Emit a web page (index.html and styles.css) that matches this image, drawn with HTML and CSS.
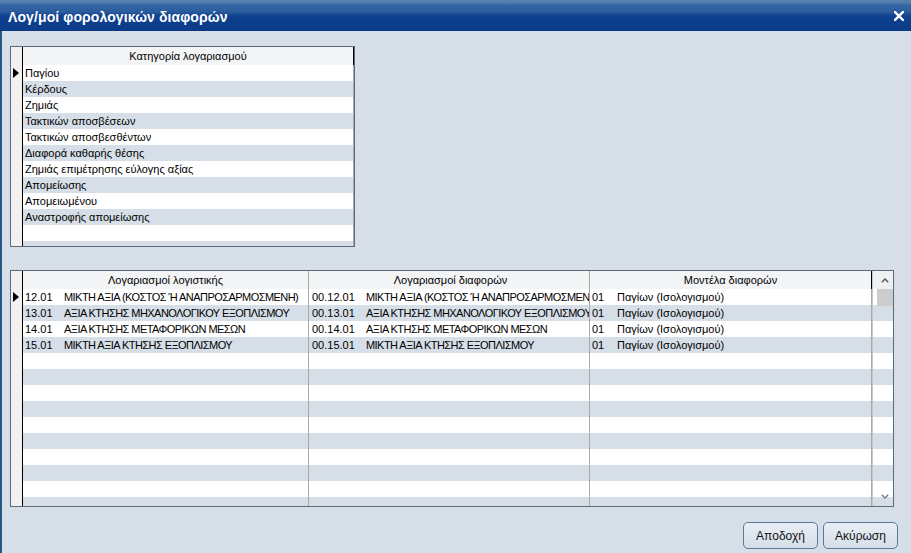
FILE: index.html
```html
<!DOCTYPE html>
<html lang="el">
<head>
<meta charset="utf-8">
<title>Λογ/μοί φορολογικών διαφορών</title>
<link rel="stylesheet" href="styles.css">
</head>
<body>
<div class="window">
  <div class="titlebar">
    <span class="title">Λογ/μοί φορολογικών διαφορών</span>
    <svg class="close" width="10" height="10" viewBox="0 0 10 10"><path d="M1 1L9 9M9 1L1 9" stroke="#fff" stroke-width="2.4" stroke-linecap="square"/></svg>
  </div>
  <div class="client">
    <div class="grid grid-top">
      <div class="row head"><div class="ind"></div><div class="cell hc last">Κατηγορία λογαριασμού</div></div>
      <div class="row w"><div class="ind"><span class="tri"></span></div><div class="cell">Παγίου</div></div>
      <div class="row g"><div class="ind"></div><div class="cell">Κέρδους</div></div>
      <div class="row w"><div class="ind"></div><div class="cell">Ζημιάς</div></div>
      <div class="row g"><div class="ind"></div><div class="cell">Τακτικών αποσβέσεων</div></div>
      <div class="row w"><div class="ind"></div><div class="cell">Τακτικών αποσβεσθέντων</div></div>
      <div class="row g"><div class="ind"></div><div class="cell">Διαφορά καθαρής θέσης</div></div>
      <div class="row w"><div class="ind"></div><div class="cell">Ζημιάς επιμέτρησης εύλογης αξίας</div></div>
      <div class="row g"><div class="ind"></div><div class="cell">Απομείωσης</div></div>
      <div class="row w"><div class="ind"></div><div class="cell">Απομειωμένου</div></div>
      <div class="row g"><div class="ind"></div><div class="cell">Αναστροφής απομείωσης</div></div>
      <div class="row w"><div class="ind"></div><div class="cell"></div></div>
      <div class="row g"><div class="ind"></div><div class="cell"></div></div>
    </div>

    <div class="grid grid-bottom">
      <div class="gmain">
        <div class="row head">
          <div class="ind"></div>
          <div class="cell c1 hc">Λογαριασμοί λογιστικής</div>
          <div class="cell c2 hc">Λογαριασμοί διαφορών</div>
          <div class="cell c3 hc last">Μοντέλα διαφορών</div>
        </div>
        <div class="row w">
          <div class="ind"><span class="tri"></span></div>
          <div class="cell c1"><span class="k1">12.01</span><span class="caps">ΜΙΚΤΗ ΑΞΙΑ (ΚΟΣΤΟΣ Ή ΑΝΑΠΡΟΣΑΡΜΟΣΜΕΝΗ)</span></div>
          <div class="cell c2"><span class="k2">00.12.01</span><span class="caps">ΜΙΚΤΗ ΑΞΙΑ (ΚΟΣΤΟΣ Ή ΑΝΑΠΡΟΣΑΡΜΟΣΜΕΝΗ)</span></div>
          <div class="cell c3"><span class="k3">01</span>Παγίων (Ισολογισμού)</div>
        </div>
        <div class="row g">
          <div class="ind"></div>
          <div class="cell c1"><span class="k1">13.01</span><span class="caps">ΑΞΙΑ ΚΤΗΣΗΣ ΜΗΧΑΝΟΛΟΓΙΚΟΥ ΕΞΟΠΛΙΣΜΟΥ</span></div>
          <div class="cell c2"><span class="k2">00.13.01</span><span class="caps">ΑΞΙΑ ΚΤΗΣΗΣ ΜΗΧΑΝΟΛΟΓΙΚΟΥ ΕΞΟΠΛΙΣΜΟΥ</span></div>
          <div class="cell c3"><span class="k3">01</span>Παγίων (Ισολογισμού)</div>
        </div>
        <div class="row w">
          <div class="ind"></div>
          <div class="cell c1"><span class="k1">14.01</span><span class="caps">ΑΞΙΑ ΚΤΗΣΗΣ ΜΕΤΑΦΟΡΙΚΩΝ ΜΕΣΩΝ</span></div>
          <div class="cell c2"><span class="k2">00.14.01</span><span class="caps">ΑΞΙΑ ΚΤΗΣΗΣ ΜΕΤΑΦΟΡΙΚΩΝ ΜΕΣΩΝ</span></div>
          <div class="cell c3"><span class="k3">01</span>Παγίων (Ισολογισμού)</div>
        </div>
        <div class="row g">
          <div class="ind"></div>
          <div class="cell c1"><span class="k1">15.01</span><span class="caps">ΜΙΚΤΗ ΑΞΙΑ ΚΤΗΣΗΣ ΕΞΟΠΛΙΣΜΟΥ</span></div>
          <div class="cell c2"><span class="k2">00.15.01</span><span class="caps">ΜΙΚΤΗ ΑΞΙΑ ΚΤΗΣΗΣ ΕΞΟΠΛΙΣΜΟΥ</span></div>
          <div class="cell c3"><span class="k3">01</span>Παγίων (Ισολογισμού)</div>
        </div>
        <div class="row w"><div class="ind"></div><div class="cell c1"></div><div class="cell c2"></div><div class="cell c3"></div></div>
        <div class="row g"><div class="ind"></div><div class="cell c1"></div><div class="cell c2"></div><div class="cell c3"></div></div>
        <div class="row w"><div class="ind"></div><div class="cell c1"></div><div class="cell c2"></div><div class="cell c3"></div></div>
        <div class="row g"><div class="ind"></div><div class="cell c1"></div><div class="cell c2"></div><div class="cell c3"></div></div>
        <div class="row w"><div class="ind"></div><div class="cell c1"></div><div class="cell c2"></div><div class="cell c3"></div></div>
        <div class="row g"><div class="ind"></div><div class="cell c1"></div><div class="cell c2"></div><div class="cell c3"></div></div>
        <div class="row w"><div class="ind"></div><div class="cell c1"></div><div class="cell c2"></div><div class="cell c3"></div></div>
        <div class="row g"><div class="ind"></div><div class="cell c1"></div><div class="cell c2"></div><div class="cell c3"></div></div>
        <div class="row w"><div class="ind"></div><div class="cell c1"></div><div class="cell c2"></div><div class="cell c3"></div></div>
        <div class="row g"><div class="ind"></div><div class="cell c1"></div><div class="cell c2"></div><div class="cell c3"></div></div>
        <div class="row w"><div class="ind"></div><div class="cell c1"></div><div class="cell c2"></div><div class="cell c3"></div></div>
      </div>
      <div class="sb">
        <div class="sb-up"><svg width="8" height="5" viewBox="0 0 8 5"><path d="M0.8 4.2L4 1L7.2 4.2" fill="none" stroke="#5a5a5a" stroke-width="1.5"/></svg></div>
        <div class="sb-thumb"></div>
        <div class="sb-track"></div>
        <div class="sb-down"><svg width="8" height="5" viewBox="0 0 8 5"><path d="M0.8 0.8L4 4L7.2 0.8" fill="none" stroke="#7a7a7a" stroke-width="1.3"/></svg></div>
      </div>
    </div>

    <div class="buttons">
      <button class="btn">Αποδοχή</button>
      <button class="btn">Ακύρωση</button>
    </div>
  </div>
</div>
</body>
</html>
```

FILE: styles.css
```css
* { box-sizing: border-box; }
html, body {
  margin: 0;
  padding: 0;
  width: 911px;
  height: 553px;
  overflow: hidden;
  background: #d6dee7;
  font-family: "Liberation Sans", Arial, sans-serif;
  font-size: 11px;
  color: #000;
}
.window {
  width: 911px;
  height: 553px;
  display: flex;
  flex-direction: column;
}
.titlebar {
  height: 31px;
  flex: none;
  display: flex;
  align-items: center;
  justify-content: space-between;
  padding: 2px 7px 0 8px;
  background: linear-gradient(to bottom, #5a82ad 0px, #4e7aab 3px, #3566a4 5px, #2a5b9c 12px, #0f4190 16px, #0b3b89 30px, #0a3982 31px);
}
.title {
  color: #fff;
  font-weight: bold;
  font-size: 14px;
  letter-spacing: 0.1px;
}
.close { display: block; margin-top: -2px; }
.client {
  flex: 1;
  border-left: 2px solid #2b5583;
  padding: 15px 13px 0 8px;
  display: flex;
  flex-direction: column;
}
.grid {
  border: 1px solid #5e6a78;
  background: #fff;
  overflow: hidden;
}
.grid-top {
  width: 345px;
  height: 201px;
}
.grid-bottom {
  width: 884px;
  height: 237px;
  margin-top: 23px;
  display: flex;
}
.row {
  display: flex;
  height: 16px;
  line-height: 16px;
  flex: none;
}
.row.head {
  height: 18px;
  line-height: 18px;
  background: #f3f4f6;
}
.row.w { background: #ffffff; }
.row.g { background: #d6dee7; }
.ind {
  width: 12px;
  flex: none;
  border-right: 1px solid #000;
  background: #f3f1ef;
  display: flex;
  align-items: center;
}
.tri {
  width: 0;
  height: 0;
  margin-left: 2px;
  border-left: 6px solid #000;
  border-top: 5px solid transparent;
  border-bottom: 5px solid transparent;
}
.cell {
  white-space: nowrap;
  overflow: hidden;
  padding-left: 2px;
}
.grid-top .cell {
  flex: 1;
  border-right: 1px solid #a9a9a9;
}
.hc {
  text-align: center;
  padding-left: 0;
  border-right: 1px solid #a9a9a9;
}
.hc.last { border-right: 1px solid #000; }
.gmain {
  flex: 1;
  display: flex;
  flex-direction: column;
  overflow: hidden;
}
.c1 { width: 286px; flex: none; border-right: 1px solid #a9a9a9; }
.c2 { width: 281px; flex: none; border-right: 1px solid #a9a9a9; padding-left: 3px; }
.c3 { width: 282px; flex: none; border-right: 1px solid #a9a9a9; }
.c3.hc.last { border-right: 1px solid #000; }
.k1 { display: inline-block; width: 39px; }
.k2 { display: inline-block; width: 54px; }
.k3 { display: inline-block; width: 25px; }
.caps { letter-spacing: -0.55px; }
.sb {
  width: 21px;
  flex: none;
  display: flex;
  flex-direction: column;
  border-left: 1px solid #c4c8cc;
  background: linear-gradient(to bottom, #ffffff 50%, #d6dee7 50%);
  background-size: 100% 32px;
  background-position: 0 18px;
}
.sb-up {
  height: 18px;
  background: #eef1f4;
  display: flex;
  align-items: center;
  justify-content: center;
  padding-left: 3px;
}
.sb-up svg, .sb-down svg { display: block; }
.sb-thumb {
  height: 17px;
  margin-left: 4px;
  background: #cdcdcd;
}
.sb-track { flex: 1; }
.sb-down {
  height: 18px;
  display: flex;
  align-items: center;
  justify-content: center;
  padding-left: 3px;
  padding-bottom: 2px;
}
.buttons {
  display: flex;
  justify-content: flex-end;
  gap: 5px;
  margin-top: 15px;
}
.btn {
  width: 75px;
  height: 27px;
  border: 1px solid #5f7796;
  border-radius: 5px;
  background: linear-gradient(to bottom, #e9eef5, #d5dee9);
  font-family: "Liberation Sans", Arial, sans-serif;
  font-size: 12px;
  color: #111;
  padding: 0;
}
```
